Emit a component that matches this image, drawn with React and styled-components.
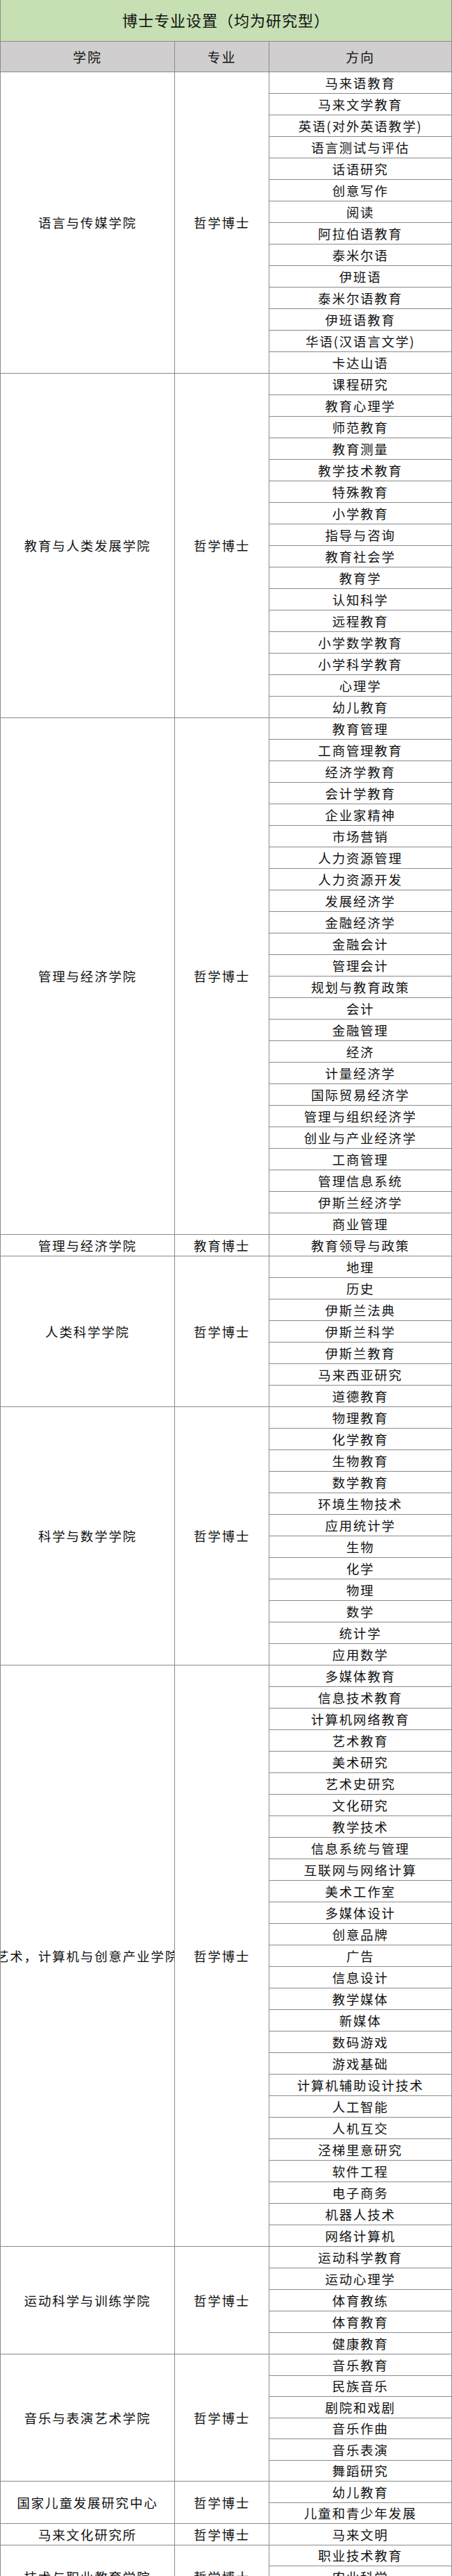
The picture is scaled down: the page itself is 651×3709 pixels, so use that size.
import React from 'react';
import styled, { createGlobalStyle } from 'styled-components';

const GlobalStyle = createGlobalStyle`
  * { box-sizing: border-box; }
  body {
    margin: 0;
    background: #fff;
    font-family: "Noto Sans CJK SC", "Noto Sans", sans-serif;
    color: #111;
  }
`;

const LINE = '#8a8a8a';

const Table = styled.div`
  width: 651px;
  border-left: 1px solid ${LINE};
  border-right: 1px solid ${LINE};
`;

const Title = styled.div`
  height: 60px;
  background: #c6e0b4;
  border-bottom: 1px solid ${LINE};
  display: flex;
  align-items: center;
  justify-content: center;
  padding-bottom: 4px;
  font-size: 22px;
  letter-spacing: 1px;
  line-height: 1;
`;

const Grid = styled.div`
  display: grid;
  grid-template-columns: 251px 136px 1fr;
`;

const HeadCell = styled.div`
  height: 44px;
  background: #d0cece;
  border-bottom: 1px solid ${LINE};
  border-right: ${(p) => (p.$last ? 'none' : `1px solid ${LINE}`)};
  display: flex;
  align-items: center;
  justify-content: center;
  font-size: 19px;
  letter-spacing: 2px;
  line-height: 1;
`;

const SpanCell = styled.div`
  border-right: 1px solid ${LINE};
  border-bottom: 1px solid ${LINE};
  display: flex;
  align-items: center;
  justify-content: center;
  overflow: hidden;
  white-space: nowrap;
  font-size: 18.5px;
  letter-spacing: 1.8px;
  line-height: 1;
  span { flex: none; }
`;

const Directions = styled.div`
  display: flex;
  flex-direction: column;
`;

const Direction = styled.div`
  height: ${(p) => p.$h}px;
  border-bottom: 1px solid ${LINE};
  display: flex;
  align-items: center;
  justify-content: center;
  white-space: nowrap;
  font-size: 18.5px;
  letter-spacing: 1.8px;
  line-height: 1;
`;

const sections = [
  {
    college: '语言与传媒学院', degree: '哲学博士',
    items: ['马来语教育', '马来文学教育', '英语(对外英语教学)', '语言测试与评估', '话语研究', '创意写作', '阅读', '阿拉伯语教育', '泰米尔语', '伊班语', '泰米尔语教育', '伊班语教育', '华语(汉语言文学)', '卡达山语']
  },
  {
    college: '教育与人类发展学院', degree: '哲学博士',
    items: ['课程研究', '教育心理学', '师范教育', '教育测量', '教学技术教育', '特殊教育', '小学教育', '指导与咨询', '教育社会学', '教育学', '认知科学', '远程教育', '小学数学教育', '小学科学教育', '心理学', '幼儿教育']
  },
  {
    college: '管理与经济学院', degree: '哲学博士',
    items: ['教育管理', '工商管理教育', '经济学教育', '会计学教育', '企业家精神', '市场营销', '人力资源管理', '人力资源开发', '发展经济学', '金融经济学', '金融会计', '管理会计', '规划与教育政策', '会计', '金融管理', '经济', '计量经济学', '国际贸易经济学', '管理与组织经济学', '创业与产业经济学', '工商管理', '管理信息系统', '伊斯兰经济学', '商业管理']
  },
  { college: '管理与经济学院', degree: '教育博士', items: ['教育领导与政策'] },
  {
    college: '人类科学学院', degree: '哲学博士',
    items: ['地理', '历史', '伊斯兰法典', '伊斯兰科学', '伊斯兰教育', '马来西亚研究', '道德教育']
  },
  {
    college: '科学与数学学院', degree: '哲学博士',
    items: ['物理教育', '化学教育', '生物教育', '数学教育', '环境生物技术', '应用统计学', '生物', '化学', '物理', '数学', '统计学', '应用数学']
  },
  {
    college: '艺术，计算机与创意产业学院', degree: '哲学博士',
    items: ['多媒体教育', '信息技术教育', '计算机网络教育', '艺术教育', '美术研究', '艺术史研究', '文化研究', '教学技术', '信息系统与管理', '互联网与网络计算', '美术工作室', '多媒体设计', '创意品牌', '广告', '信息设计', '教学媒体', '新媒体', '数码游戏', '游戏基础', '计算机辅助设计技术', '人工智能', '人机互交', '泾梯里意研究', '软件工程', '电子商务', '机器人技术', '网络计算机']
  },
  {
    college: '运动科学与训练学院', degree: '哲学博士',
    items: ['运动科学教育', '运动心理学', '体育教练', '体育教育', '健康教育']
  },
  {
    college: '音乐与表演艺术学院', degree: '哲学博士', rowH: 30.5,
    items: ['音乐教育', '民族音乐', '剧院和戏剧', '音乐作曲', '音乐表演', '舞蹈研究']
  },
  { college: '国家儿童发展研究中心', degree: '哲学博士', rowH: 30.5, items: ['幼儿教育', '儿童和青少年发展'] },
  { college: '马来文化研究所', degree: '哲学博士', rowH: 30.5, items: ['马来文明'] },
  { college: '技术与职业教育学院', degree: '哲学博士', rowH: 30.5, items: ['职业技术教育', '农业科学', '工程技术教育'] }
];

const Section = ({ college, degree, items, rowH = 31 }) => (
  <Grid>
    <SpanCell><span>{college}</span></SpanCell>
    <SpanCell><span>{degree}</span></SpanCell>
    <Directions>
      {items.map((d, i) => (
        <Direction key={i} $h={rowH}>{d}</Direction>
      ))}
    </Directions>
  </Grid>
);

const App = () => (
  <>
    <GlobalStyle />
    <Table>
      <Title>博士专业设置（均为研究型）</Title>
      <Grid>
        <HeadCell>学院</HeadCell>
        <HeadCell>专业</HeadCell>
        <HeadCell $last>方向</HeadCell>
      </Grid>
      {sections.map((s, i) => (
        <Section key={i} {...s} />
      ))}
    </Table>
  </>
);

export default App;
